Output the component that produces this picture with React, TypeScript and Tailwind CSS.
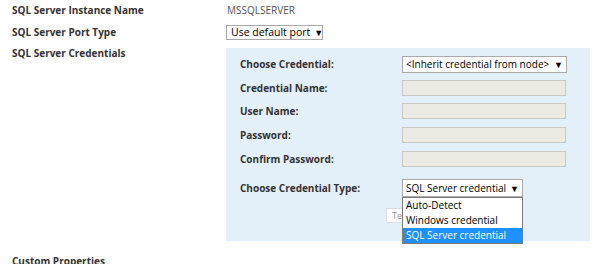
import React from "react";

const font = { fontFamily: '"Open Sans", "Liberation Sans", sans-serif' };

function Caret() {
  return <span className="ml-auto pl-1 text-[9px] leading-none text-black">▼</span>;
}

function CredRow({ label, children, className = "" }: { label: string; children: React.ReactNode; className?: string }) {
  return (
    <div className={`flex items-center ${className}`}>
      <div className="w-[162px] shrink-0 whitespace-nowrap text-[10px] font-bold text-[#333]">{label}</div>
      {children}
    </div>
  );
}

function Field() {
  return <div className="h-[16px] w-[164px] border border-[#c9c9c3] bg-[#ebebe4]" />;
}

export default function App() {
  return (
    <div className="h-[264px] w-[607px] overflow-hidden bg-white pl-3 text-[#333]" style={font}>
      <div className="grid grid-cols-[214px_1fr]">
        <div className="flex h-[21px] items-center whitespace-nowrap text-[10px] font-bold">SQL Server Instance Name</div>
        <div className="flex h-[21px] items-center pl-px text-[10px] text-[#555]">MSSQLSERVER</div>

        <div className="flex h-[23px] items-center whitespace-nowrap text-[10px] font-bold">SQL Server Port Type</div>
        <div className="flex h-[23px] items-center">
          <div className="flex h-[15px] w-[97px] items-center whitespace-nowrap border border-[#aaa] bg-white px-[4px] text-[10.5px] text-black">
            Use default port
            <Caret />
          </div>
        </div>

        <div className="pt-[2px] whitespace-nowrap text-[10px] font-bold leading-[15px]">SQL Server Credentials</div>
        <div className="mt-1 w-[364px] bg-[#e3f0f9] pb-[18px] pl-[14px] pt-2">
          <CredRow label="Choose Credential:">
            <div className="flex h-[17px] w-[165px] items-center whitespace-nowrap border border-[#aaa] bg-white px-[3px] text-[10px] text-black">
              &lt;Inherit credential from node&gt;
              <Caret />
            </div>
          </CredRow>
          <CredRow label="Credential Name:" className="mt-[7px]">
            <Field />
          </CredRow>
          <CredRow label="User Name:" className="mt-[7px]">
            <Field />
          </CredRow>
          <CredRow label="Password:" className="mt-[8px]">
            <Field />
          </CredRow>
          <CredRow label="Confirm Password:" className="mt-[8px]">
            <Field />
          </CredRow>
          <CredRow label="Choose Credential Type:" className="mt-[12px]">
            <div className="relative">
              <div className="flex h-[18px] w-[121px] items-center whitespace-nowrap border border-[#aaa] bg-white px-[3px] text-[10px] text-black">
                SQL Server credential
                <Caret />
              </div>
              <div className="absolute left-0 top-[18px] z-10 w-[121px] whitespace-nowrap border border-[#7b7b7b] bg-white text-[10px] leading-[15px] text-black">
                <div className="pl-[3px]">Auto-Detect</div>
                <div className="pl-[3px]">Windows credential</div>
                <div className="bg-[#1e90ff] pl-[3px] text-white">SQL Server credential</div>
              </div>
            </div>
          </CredRow>
          <div className="mt-[11px] flex pl-[146px]">
            <div className="flex h-[15px] w-[50px] items-center border border-[#ddd] bg-white pl-[5px] text-[9px] text-[#999]">
              Test
            </div>
          </div>
        </div>
      </div>
      <div className="mt-[13px] whitespace-nowrap text-[10px] font-bold leading-[15px]">Custom Properties</div>
    </div>
  );
}
